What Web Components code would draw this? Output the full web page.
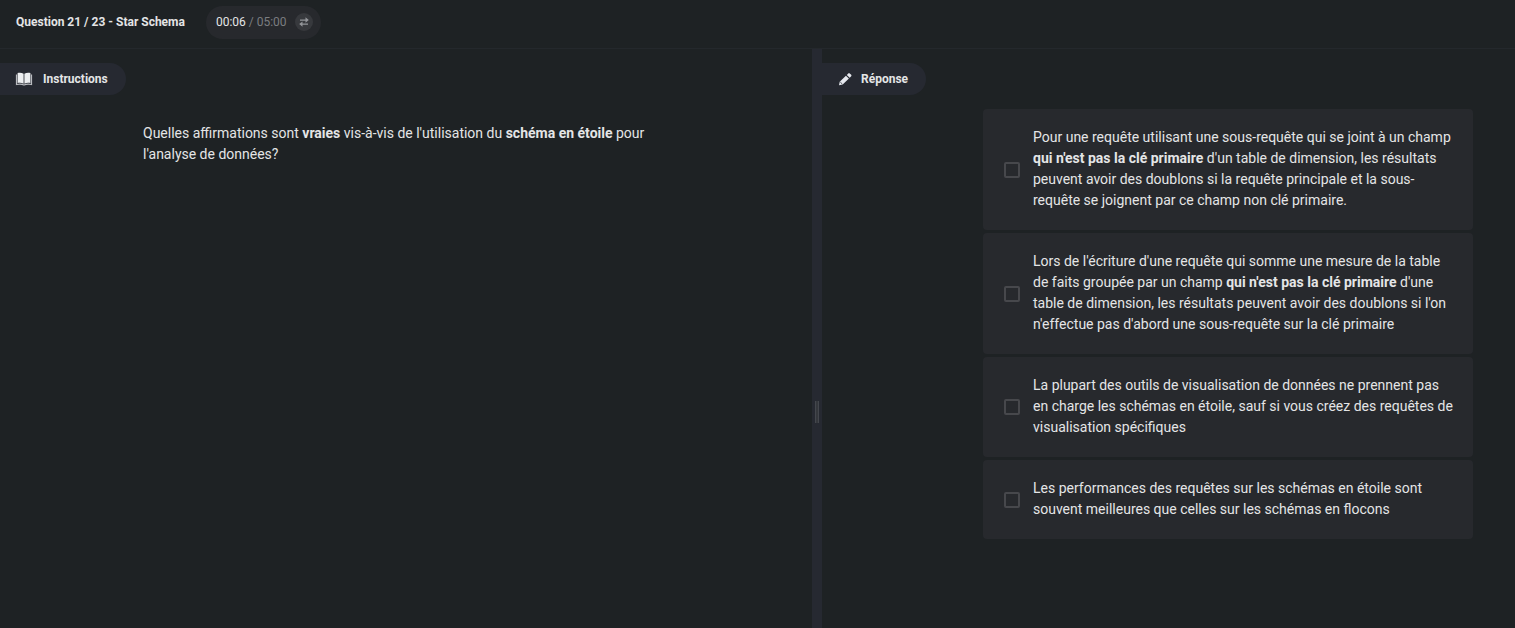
<!DOCTYPE html>
<html lang="fr">
<head>
<meta charset="utf-8">
<title>Question 21 / 23 - Star Schema</title>
<style>
  :root {
    --bg: #1e2224;
    --panel: #262931;
    --card: #27292d;
    --text: #e4e5e6;
    --muted: #7b7d80;
  }
  html, body { height: 100%; }
  body {
    margin: 0;
    background: var(--bg);
    color: var(--text);
    font: 14px/21px Roboto, "Liberation Sans", sans-serif;
  }
</style>
</head>
<body>
<quiz-page>
  <quiz-header slot="header">
    Question 21 / 23 - Star Schema
    <quiz-timer slot="timer" elapsed="00:06" total="05:00"></quiz-timer>
  </quiz-header>
  <quiz-question slot="question">Quelles affirmations sont <b>vraies</b> vis-à-vis de l'utilisation du <b>schéma en étoile</b> pour l'analyse de données?</quiz-question>
  <quiz-answers slot="answers">
    <quiz-option>Pour une requête utilisant une sous-requête qui se joint à un champ <b>qui n'est pas la clé primaire</b> d'un table de dimension, les résultats peuvent avoir des doublons si la requête principale et la sous-requête se joignent par ce champ non clé primaire.</quiz-option>
    <quiz-option>Lors de l'écriture d'une requête qui somme une mesure de la table de faits groupée par un champ <b>qui n'est pas la clé primaire</b> d'une table de dimension, les résultats peuvent avoir des doublons si l'on n'effectue pas d'abord une sous-requête sur la clé primaire</quiz-option>
    <quiz-option>La plupart des outils de visualisation de données ne prennent pas en charge les schémas en étoile, sauf si vous créez des requêtes de visualisation spécifiques</quiz-option>
    <quiz-option>Les performances des requêtes sur les schémas en étoile sont souvent meilleures que celles sur les schémas en flocons</quiz-option>
  </quiz-answers>
</quiz-page>

<script>
  const define = (name, html) => {
    const template = document.createElement('template');
    template.innerHTML = html;
    customElements.define(name, class extends HTMLElement {
      constructor() {
        super();
        this.attachShadow({ mode: 'open' }).append(template.content.cloneNode(true));
      }
      connectedCallback() {
        this.shadowRoot.querySelectorAll('[data-attr]').forEach(node => {
          node.textContent = this.getAttribute(node.dataset.attr);
        });
      }
    });
  };

  define('quiz-timer', `
    <style>
      :host { display: flex; align-items: center; box-sizing: border-box; height: 33px; padding: 0 8px 0 10px; border-radius: 17px; background: var(--card); font-size: 12px; font-weight: 400; }
      .total { color: var(--muted); white-space: pre; }
      button { display: grid; place-items: center; width: 18px; height: 18px; margin: 0 0 0 8px; padding: 0; border: 0; border-radius: 50%; background: #37393d; color: #94969a; }
    </style>
    <span data-attr="elapsed"></span><span class="total"> / </span><span class="total" data-attr="total"></span>
    <button type="button" aria-label="Changer l'affichage du temps">
      <svg width="10" height="10" viewBox="0 0 10 10" fill="currentColor" aria-hidden="true"><path d="M1 2.400H6.500V0.300L9.800 3 6.500 5.700V3.700H1zM9 6.400H3.500V4.400L0.200 7.100 3.500 9.800V7.700H9z"/></svg>
    </button>`);

  define('quiz-header', `
    <style>
      :host { display: flex; align-items: center; gap: 21px; box-sizing: border-box; height: 49px; padding: 0 16px 4px; border-bottom: 1px solid #24282c; }
      h1 { margin: 0; font-size: 12px; line-height: 21px; font-weight: 700; }
    </style>
    <h1><slot></slot></h1><slot name="timer"></slot>`);

  define('quiz-tab', `
    <style>
      :host { display: flex; align-items: center; gap: 9px; box-sizing: border-box; width: max-content; height: 32px; padding: 0 18px 0 15px; border-radius: 0 16px 16px 0; background: var(--panel); }
      h2 { margin: 0; font-size: 12px; line-height: 21px; font-weight: 700; }
      ::slotted(svg) { display: block; }
    </style>
    <slot name="icon"></slot><h2><slot></slot></h2>`);

  define('quiz-question', `
    <style>
      :host { display: block; max-width: 526px; margin: 28px 16px 0 143px; }
      p { margin: 0; }
    </style>
    <p><slot></slot></p>`);

  define('quiz-option', `
    <style>
      :host { display: block; border-radius: 4px; background: var(--card); }
      label { display: flex; align-items: center; gap: 13px; padding: 0 20px 0 21px; }
      input { appearance: none; flex: none; box-sizing: border-box; width: 16px; height: 16px; margin: 0; border: 2px solid #47484c; border-radius: 2px; }
      input:checked { background: #8c8e92; }
      span { flex: 1; padding: 18px 0 19px; }
    </style>
    <label><input type="checkbox"><span><slot></slot></span></label>`);

  define('quiz-answers', `
    <style>
      :host { display: flex; flex-direction: column; gap: 3px; margin: 14px 42px 16px 161px; }
    </style>
    <slot></slot>`);

  define('quiz-page', `
    <style>
      :host { display: flex; flex-direction: column; min-height: 100%; }
      main { flex: 1; display: grid; grid-template-columns: 812fr 10px 693fr; }
      section { padding-top: 14px; min-width: 0; }
      .divider { display: grid; place-items: center; padding-top: 146px; background: var(--panel); }
      .grip { box-sizing: border-box; width: 4px; height: 22px; border: solid #44474d; border-width: 0 1px; background: #34373c; }
    </style>
    <slot name="header"></slot>
    <main>
      <section>
        <quiz-tab>
          <svg slot="icon" width="19" height="14" viewBox="0 0 19 14" fill="none" aria-hidden="true"><path d="M1.500 2.500V12.500C4.500 11.700 7 12 9 13 11 12 13.500 11.700 16.500 12.500V2.500" stroke="#b9bbbf" stroke-width="1.200"/><path d="M2.600 1C5 0.500 7 0.800 8.600 1.800V11.800C7 10.800 5 10.500 2.600 11zM15.400 1C13 0.500 11 0.800 9.400 1.800V11.800C11 10.800 13 10.500 15.400 11z" fill="#eceef0"/></svg>
          Instructions
        </quiz-tab>
        <slot name="question"></slot>
      </section>
      <div class="divider" role="separator" aria-orientation="vertical"><div class="grip"></div></div>
      <section>
        <quiz-tab>
          <svg slot="icon" width="15" height="14" viewBox="0 0 15 14" fill="#e6e8ee" aria-hidden="true"><path d="M2 13.300 2.700 9.700 8.900 3.700 11.900 6.600 5.700 12.600zM9.800 2.900 11.300 1.400Q12 0.800 12.700 1.400L14.200 2.800Q14.800 3.500 14.200 4.200L12.700 5.700z"/><path d="M3.300 10.100 5.300 12" stroke="#262931" stroke-width="0.800"/></svg>
          Réponse
        </quiz-tab>
        <slot name="answers"></slot>
      </section>
    </main>`);
</script>
</body>
</html>
